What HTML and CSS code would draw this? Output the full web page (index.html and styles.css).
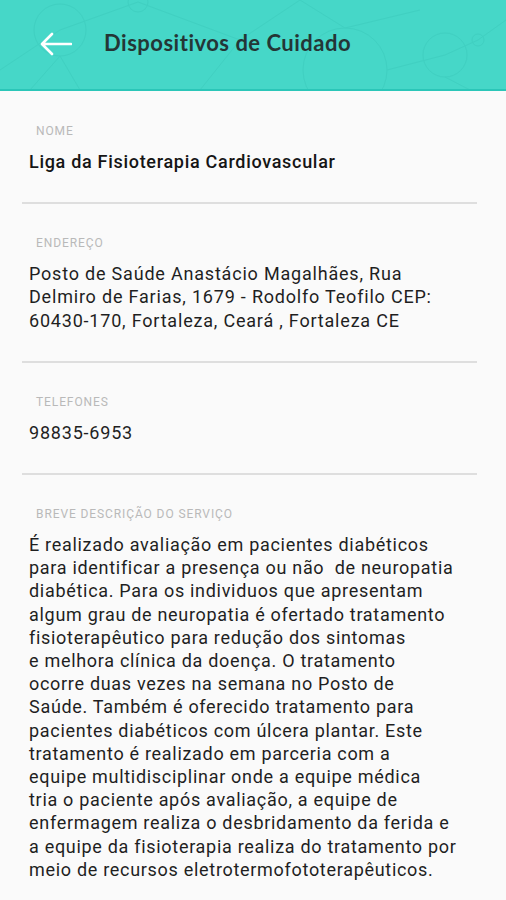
FILE: index.html
```html
<!DOCTYPE html>
<html lang="pt-BR">
<head>
    <meta charset="UTF-8">
    <title>Dispositivos de Cuidado</title>
    <link rel="stylesheet" href="styles.css">
</head>
<body>
<div class="header">
    <svg class="pattern" width="506" height="90" viewBox="0 0 506 90">
        <g fill="none" stroke="#3ccabc" stroke-width="1">
            <circle cx="60" cy="30" r="26"/>
            <circle cx="345" cy="70" r="42"/>
            <circle cx="445" cy="55" r="22"/>
            <circle cx="478" cy="40" r="6"/>
            <circle cx="138" cy="2" r="10"/>
            <path d="M0 70 L60 30 L138 2 M60 56 L30 90 M60 56 L80 90 M138 2 L240 40 L300 0 M240 40 L200 90 M300 0 L345 28 L420 10 M387 70 L445 55 L478 40 L506 20 M445 77 L470 90"/>
        </g>
    </svg>
    <a class="back">
        <svg width="32" height="24" viewBox="0 0 32 24">
            <path d="M31 12 H3 M12 2 L2 12 L12 22" fill="none" stroke="#fff" stroke-width="2.6" stroke-linecap="round" stroke-linejoin="round"/>
        </svg>
    </a>
    <h1 class="title">Dispositivos de Cuidado</h1>
</div>
<div class="content">
    <div class="field">
        <div class="label">NOME</div>
        <div class="value bold">Liga da Fisioterapia Cardiovascular</div>
    </div>
    <div class="field">
        <div class="label">ENDEREÇO</div>
        <div class="value">Posto de Saúde Anastácio Magalhães, Rua<br>Delmiro de Farias, 1679 - Rodolfo Teofilo CEP:<br>60430-170, Fortaleza, Ceará , Fortaleza CE</div>
    </div>
    <div class="field">
        <div class="label">TELEFONES</div>
        <div class="value">98835-6953</div>
    </div>
    <div class="field last">
        <div class="label">BREVE DESCRIÇÃO DO SERVIÇO</div>
        <div class="value desc">É realizado avaliação em pacientes diabéticos<br>para identificar a presença ou não &nbsp;de neuropatia<br>diabética. Para os individuos que apresentam<br>algum grau de neuropatia é ofertado tratamento<br>fisioterapêutico para redução dos sintomas<br>e melhora clínica da doença. O tratamento<br>ocorre duas vezes na semana no Posto de<br>Saúde. Também é oferecido tratamento para<br>pacientes diabéticos com úlcera plantar. Este<br>tratamento é realizado em parceria com a<br>equipe multidisciplinar onde a equipe médica<br>tria o paciente após avaliação, a equipe de<br>enfermagem realiza o desbridamento da ferida e<br>a equipe da fisioterapia realiza do tratamento por<br>meio de recursos eletrotermofototerapêuticos.</div>
    </div>
</div>
</body>
</html>
```

FILE: styles.css
```css
*{
    margin: 0;
    padding: 0;
    box-sizing: border-box;
}
body{
    background: #fafafa;
    font-family: Roboto, "Liberation Sans", sans-serif;
    width: 506px;
}
.header{
    position: relative;
    height: 91px;
    background: #46d7c8;
    border-bottom: 2px solid #2bc6b8;
    display: flex;
    align-items: center;
    padding-left: 40px;
    overflow: hidden;
}
.pattern{
    position: absolute;
    left: 0;
    top: 0;
    opacity: 0.5;
}
.back{
    position: relative;
    display: flex;
    width: 32px;
    height: 24px;
    margin-top: -2px;
}
.title{
    position: relative;
    font-family: Lato, sans-serif;
    font-weight: bold;
    font-size: 22px;
    letter-spacing: 0.5px;
    color: #243636;
    margin-left: 32px;
    margin-top: -4px;
}
.content{
    padding: 0 29px 0 22px;
}
.field{
    border-bottom: 2px solid #dedede;
    padding: 31px 0 29px 7px;
}
.field:first-child{
    padding-top: 32px;
}
.field.last{
    border-bottom: none;
}
.label{
    font-size: 12px;
    letter-spacing: 0.9px;
    color: #b9b9b9;
    margin-left: 7px;
    line-height: 16px;
    margin-bottom: 11px;
}
.value{
    font-size: 18px;
    letter-spacing: 0.8px;
    line-height: 23.2px;
    color: #1f1f1f;
}
.value.bold{
    font-weight: 500;
    letter-spacing: 0.7px;
    color: #151515;
}
.value.desc{
    letter-spacing: 0.7px;
}
```
